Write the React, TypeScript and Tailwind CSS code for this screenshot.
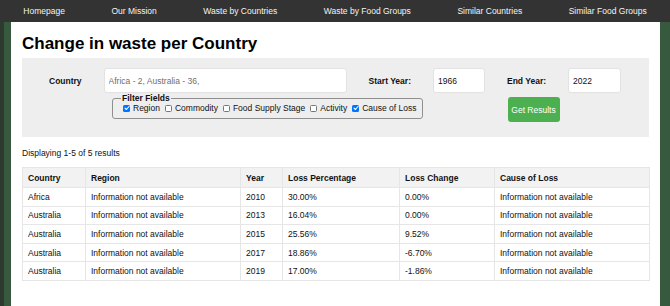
const NAV = ["Homepage", "Our Mission", "Waste by Countries", "Waste by Food Groups", "Similar Countries", "Similar Food Groups"];

type Row = { country: string; region: string; year: number; pct: string; change: string; cause: string };

const ROWS: Row[] = [
  { country: "Africa", region: "Information not available", year: 2010, pct: "30.00%", change: "0.00%", cause: "Information not available" },
  { country: "Australia", region: "Information not available", year: 2013, pct: "16.04%", change: "0.00%", cause: "Information not available" },
  { country: "Australia", region: "Information not available", year: 2015, pct: "25.56%", change: "9.52%", cause: "Information not available" },
  { country: "Australia", region: "Information not available", year: 2017, pct: "18.86%", change: "-6.70%", cause: "Information not available" },
  { country: "Australia", region: "Information not available", year: 2019, pct: "17.00%", change: "-1.86%", cause: "Information not available" },
];

const FILTERS = [
  { label: "Region", checked: true },
  { label: "Commodity", checked: false },
  { label: "Food Supply Stage", checked: false },
  { label: "Activity", checked: false },
  { label: "Cause of Loss", checked: true },
];

function Check({ checked }: { checked: boolean }) {
  return checked ? (
    <span className="w-[7px] h-[7px] rounded-[1.5px] bg-[#0075ff] flex items-center justify-center">
      <svg width="6" height="6" viewBox="0 0 6 6" fill="none">
        <path d="M1 3.1 L2.4 4.5 L5 1.5" stroke="white" strokeWidth="1.1" strokeLinecap="round" strokeLinejoin="round" />
      </svg>
    </span>
  ) : (
    <span className="w-[7px] h-[7px] rounded-[1.5px] bg-white border border-[#767676]" />
  );
}

export default function App() {
  return (
    <div className="w-[670px] h-[306px] overflow-hidden flex flex-col bg-[#37593d] font-['Liberation_Sans',Arial,sans-serif] text-[8.5px] leading-[10px] text-[#111]">
      {/* Nav */}
      <nav className="h-[22px] shrink-0 bg-[#333333] flex items-center justify-around text-[#f4f4f4]">
        {NAV.map((n) => (
          <span key={n}>{n}</span>
        ))}
      </nav>

      <div className="flex flex-1 min-h-0">
        <div className="w-[4px] bg-[#2c3a30]" />
        <div className="w-[7px]" />

        {/* Main panel */}
        <main className="w-[649px] bg-white pt-[12px] px-[11px]">
          <h1 className="text-[17px] leading-[20px] font-bold text-black mb-[4px]">Change in waste per Country</h1>

          {/* Form */}
          <div className="bg-[#eeeeee] pt-[10px] pb-[15px]">
            <div className="flex items-center gap-[22px] pl-[27px]">
              <label className="font-bold">Country</label>
              <input
                className="w-[243px] h-[25px] bg-white border border-[#e2e2e2] rounded-[3px] px-[4px] outline-none placeholder:text-[#6f6f6f]"
                placeholder="Africa - 2, Australia - 36,"
              />
              <label className="font-bold">Start Year:</label>
              <input className="w-[52px] h-[25px] bg-white border border-[#e2e2e2] rounded-[3px] px-[4px] outline-none" defaultValue="1966" />
              <label className="font-bold">End Year:</label>
              <input className="w-[53px] h-[25px] bg-white border border-[#e2e2e2] rounded-[3px] px-[4px] outline-none" defaultValue="2022" />
            </div>

            <div className="flex items-start">
              <fieldset className="ml-[90px] border border-[#8f8f8f] rounded-[3px] pl-[8px] pr-[5px] pb-[5px]">
                <legend className="font-bold px-[1px]">Filter Fields</legend>
                <div className="flex items-center gap-[5px] ml-[2px] whitespace-nowrap">
                  {FILTERS.map((f) => (
                    <span key={f.label} className="flex items-center gap-[3px]">
                      <Check checked={f.checked} />
                      <span>{f.label}</span>
                    </span>
                  ))}
                </div>
              </fieldset>
              <button className="ml-[85px] mt-[4px] w-[52px] h-[25px] bg-[#4caf50] text-white rounded-[3px]">Get Results</button>
            </div>
          </div>

          <p className="mt-[11px] mb-[9px]">Displaying 1-5 of 5 results</p>

          {/* Results */}
          <table className="w-[627px] table-fixed border-collapse border border-[#e6e6e6]">
            <colgroup>
              <col className="w-[63px]" />
              <col className="w-[155px]" />
              <col className="w-[42px]" />
              <col className="w-[117px]" />
              <col className="w-[95px]" />
              <col className="w-[155px]" />
            </colgroup>
            <thead>
              <tr className="h-[20px] bg-[#f2f2f2] font-bold text-left">
                {["Country", "Region", "Year", "Loss Percentage", "Loss Change", "Cause of Loss"].map((h) => (
                  <th key={h} className="px-[5px] border border-[#e6e6e6] font-bold">{h}</th>
                ))}
              </tr>
            </thead>
            <tbody>
              {ROWS.map((r, i) => (
                <tr key={i} className="h-[18.6px]">
                  <td className="px-[5px] border border-[#e6e6e6]">{r.country}</td>
                  <td className="px-[5px] border border-[#e6e6e6]">{r.region}</td>
                  <td className="px-[5px] border border-[#e6e6e6]">{r.year}</td>
                  <td className="px-[5px] border border-[#e6e6e6]">{r.pct}</td>
                  <td className="px-[5px] border border-[#e6e6e6]">{r.change}</td>
                  <td className="px-[5px] border border-[#e6e6e6]">{r.cause}</td>
                </tr>
              ))}
            </tbody>
          </table>
        </main>
      </div>
    </div>
  );
}
